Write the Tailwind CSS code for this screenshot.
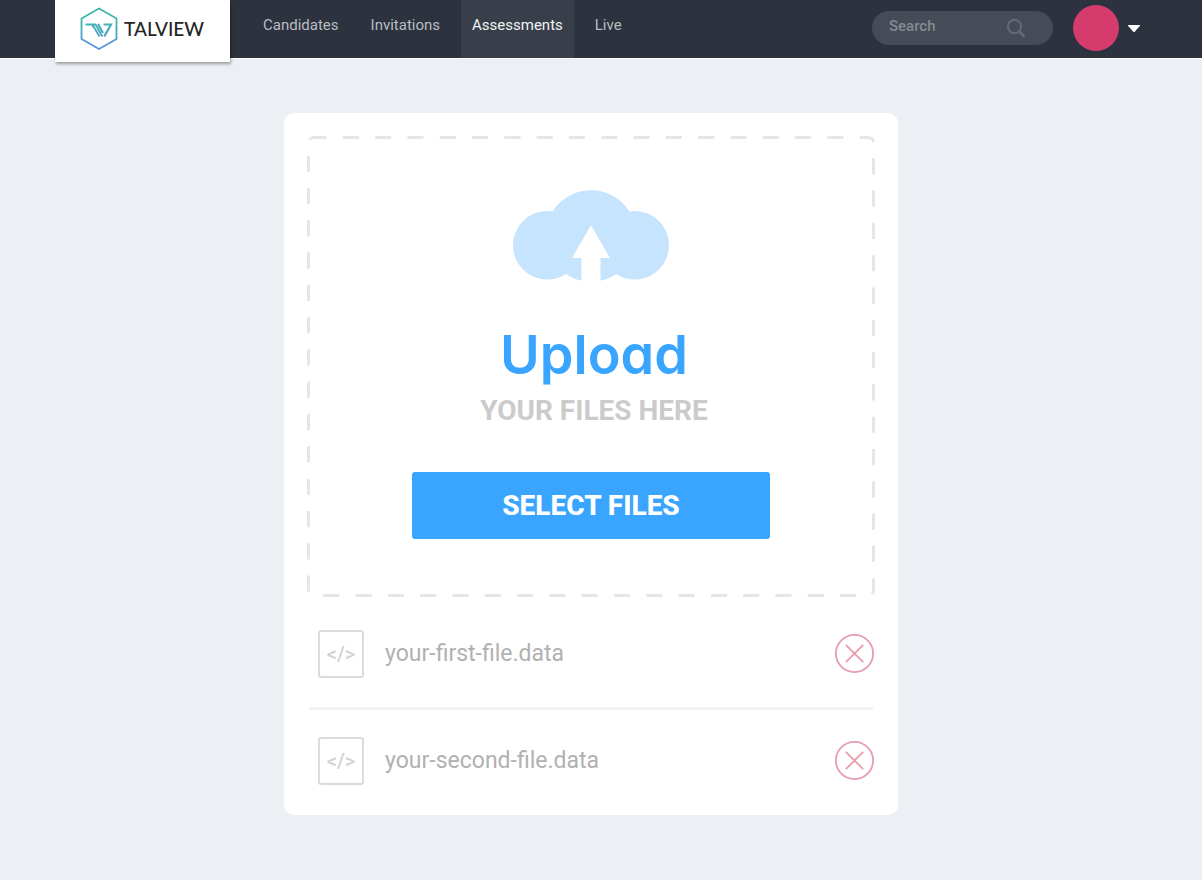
<!DOCTYPE html>
<html lang="en">

<head>
    <meta charset="utf-8" />
    <meta name="viewport" content="width=device-width, initial-scale=1" />
    <title>Talview - Upload files</title>
    <script src="https://cdn.jsdelivr.net/npm/@tailwindcss/browser@4"></script>
</head>

<body class="min-h-screen bg-[#ecf0f4] font-['Roboto',sans-serif]">
    <header class="flex h-[59px] items-start border-b border-white bg-[#2c333f] pl-[55px] pr-[62px]">
        <a href="#" aria-label="Talview home" class="z-10 flex h-[62px] w-[175px] shrink-0 items-center gap-[6px] bg-white pb-1 pl-[25px] shadow-[1px_2px_3px_rgba(0,0,0,0.35)]">
            <svg class="h-[44px] w-[38px]" viewBox="0 0 38 44" fill="none">
                <defs>
                    <linearGradient id="brand" gradientUnits="userSpaceOnUse" x1="0" y1="2" x2="0" y2="42">
                        <stop offset="0.25" stop-color="#3fb8a9" />
                        <stop offset="0.9" stop-color="#5596dc" />
                    </linearGradient>
                </defs>
                <path d="M19 1.5 36.500 11.5V32L19 42 1.500 32V11.5Z" stroke="url(#brand)" stroke-width="1.8" />
                <path d="M5.500 17.500H15.500L22.300 29.500M12 19.500H13.500L19.500 29.500" stroke="url(#brand)" stroke-width="1.800" />
                <path d="M18 17 23 26M23.500 17.500H31L24.300 29.500" stroke="url(#brand)" stroke-width="2.200" />
            </svg>
            <span class="font-['Lato',sans-serif] text-[19px] font-medium leading-6 text-[#252525]">TALVIEW</span>
        </a>
        <nav class="ml-[22px] flex h-full gap-[10px] text-[15px] text-[#b9bcc0]">
            <a href="#" class="flex h-full items-center px-[11px] pb-2">Candidates</a>
            <a href="#" class="flex h-full items-center px-[11px] pb-2">Invitations</a>
            <a href="#" class="flex h-full items-center bg-[#383f4a] px-[11px] pb-2 text-[#f1f2f3]">Assessments</a>
            <a href="#" class="flex h-full items-center px-[11px] pb-2">Live</a>
        </nav>
        <div class="ml-auto flex h-[56px] items-center">
            <label class="flex h-[34px] w-[181px] items-center rounded-full bg-[#454c57] pl-[17px] pr-[27px]">
                <input type="text" placeholder="Search" aria-label="Search" class="w-full min-w-0 pb-1 text-[15px] font-medium text-[#d5d7da] outline-none placeholder:text-[#868a8f]" />
                <svg class="h-[20px] w-[20px] shrink-0" viewBox="0 0 20 20" fill="none" stroke="#626972" stroke-width="2.2">
                    <circle cx="8.500" cy="8.500" r="6.600" />
                    <path d="m13.200 13.200 5.300 5.300" stroke-width="2.800" />
                </svg>
            </label>
            <button type="button" aria-label="Account" class="ml-5 flex items-center gap-[9px]">
                <span class="h-[46px] w-[46px] rounded-full bg-[#d63b6e]"></span>
                <svg class="h-[7px] w-[12px]" viewBox="0 0 12 7" fill="#fff">
                    <path d="M0 0H12V.8L6.500 7H5.500L0 .8Z" />
                </svg>
            </button>
        </div>
    </header>

    <main class="flex justify-center pr-5 pt-[54px]">
        <div class="w-full max-w-[614px] rounded-[10px] bg-white pb-[30px] pt-[23px]">
            <!-- Drop zone -->
            <section class="relative mx-[23px] flex flex-col items-center pb-[58px] pt-[54px]">
                <svg class="pointer-events-none absolute inset-0 h-full w-full" fill="none">
                    <rect class="h-[calc(100%-3px)] w-[calc(100%-3px)]" x="1.500" y="1.500" rx="5" stroke="#e6e6e6" stroke-width="3" stroke-dasharray="16.200 16.100" stroke-dashoffset="3" />
                </svg>
                <svg class="h-[92px] w-[156px]" viewBox="0 0 156 92" fill="#c6e4fd">
                    <circle cx="34.300" cy="55.300" r="34.300" />
                    <circle cx="78" cy="46" r="45.700" />
                    <circle cx="121.700" cy="55.300" r="34.300" />
                    <path d="M78 35.300 97 68H87.500V92H68.500V68H59Z" fill="#fff" />
                </svg>
                <h1 class="mt-[43px] pl-[6px] font-['Inter',sans-serif] text-[54px] font-semibold leading-[60px] text-[#39a5ff] [font-feature-settings:'cv11']">Upload</h1>
                <p class="mt-[10px] pl-[6px] text-[28px] font-bold leading-8 text-[#cbcbcb]">YOUR FILES HERE</p>
                <button type="button" class="mt-[45px] h-[67px] w-[358px] rounded-[3px] bg-[#39a5ff] text-[28px] font-extrabold text-white">SELECT FILES</button>
            </section>

            <!-- Uploaded files -->
            <ul class="mx-[25px] text-[23px] text-[#b1b1b1]">
                <li class="flex items-center border-b-[3px] border-[#f2f2f2] pb-[29px] pl-[9px] pt-[33px]">
                    <span class="flex h-[48px] w-[46px] items-center justify-center rounded-[3px] border-2 border-[#dbdbdb] text-[20px] font-medium text-[#d3d3d3]">&lt;/&gt;</span>
                    <span class="ml-[21px]">your-first-file.data</span>
                    <button type="button" aria-label="Remove your-first-file.data" class="-mr-0.5 ml-auto">
                        <svg class="h-[40px] w-[40px]" viewBox="0 0 40 40" fill="none" stroke="#e99cae" stroke-width="1.8">
                            <circle cx="19.500" cy="19.500" r="18.600" />
                            <path d="m10.800 10.800 17.400 17.400M28.200 10.800 10.800 28.200" />
                        </svg>
                    </button>
                </li>
                <li class="flex items-center pl-[9px] pt-[27px]">
                    <span class="flex h-[48px] w-[46px] items-center justify-center rounded-[3px] border-2 border-[#dbdbdb] text-[20px] font-medium text-[#d3d3d3]">&lt;/&gt;</span>
                    <span class="ml-[21px]">your-second-file.data</span>
                    <button type="button" aria-label="Remove your-second-file.data" class="-mr-0.5 ml-auto">
                        <svg class="h-[40px] w-[40px]" viewBox="0 0 40 40" fill="none" stroke="#e99cae" stroke-width="1.8">
                            <circle cx="19.500" cy="19.500" r="18.600" />
                            <path d="m10.800 10.800 17.400 17.400M28.200 10.800 10.800 28.200" />
                        </svg>
                    </button>
                </li>
            </ul>
        </div>
    </main>
</body>

</html>
